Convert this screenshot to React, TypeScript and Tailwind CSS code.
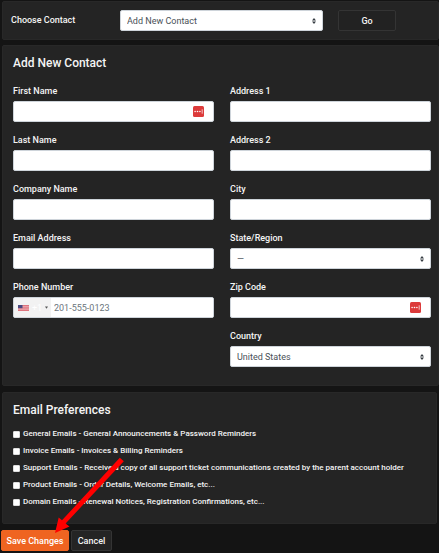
import type { ReactNode } from "react";

const control =
  "block h-[21px] w-full rounded-[2px] border border-[#ced4da] bg-white px-[6px] text-[9px] leading-3 text-[#495057] placeholder:text-[#6c757d] outline-none";

function Panel({ className = "", children }: { className?: string; children: ReactNode }) {
  return (
    <section className={`rounded-[2px] border border-[#282828] bg-[#242424] ${className}`}>{children}</section>
  );
}

function Field({ id, label, children }: { id: string; label: string; children: ReactNode }) {
  return (
    <div className="flex flex-col gap-1">
      <label htmlFor={id} className="text-[9px] leading-3 font-medium">
        {label}
      </label>
      {children}
    </div>
  );
}

function Select({ id, value }: { id: string; value: string }) {
  return (
    <div className="relative">
      <select id={id} className={`${control} appearance-none`}>
        <option>{value}</option>
      </select>
      <svg
        className="pointer-events-none absolute top-2 right-[7px] h-[6px] w-1"
        viewBox="0 0 4 5"
        preserveAspectRatio="none"
        fill="#343a40"
      >
        <path d="M2 0L0 2h4zm0 5L0 3h4z" />
      </svg>
    </div>
  );
}

function PasswordBadge() {
  return (
    <svg className="pointer-events-none absolute top-[5px] right-[10px] h-[11px] w-[11px]" viewBox="0 0 11 11">
      <rect width="11" height="11" rx="1.5" fill="#dc3b3b" />
      <circle cx="2.1" cy="5.5" r="0.8" fill="#fff" />
      <circle cx="4.5" cy="5.5" r="0.8" fill="#fff" />
      <circle cx="6.9" cy="5.5" r="0.8" fill="#fff" />
      <path d="M9.2 3.3v4.4" stroke="#fff" strokeWidth="0.7" />
    </svg>
  );
}

function TextField({ id, label, badge = false }: { id: string; label: string; badge?: boolean }) {
  return (
    <Field id={id} label={label}>
      <div className="relative">
        <input id={id} type="text" className={control} />
        {badge && <PasswordBadge />}
      </div>
    </Field>
  );
}

function Flag() {
  return (
    <svg className="h-[6px] w-[11px] shrink-0" viewBox="0 0 11 6">
      <rect width="11" height="6" fill="#f0b4ba" />
      <path d="M0 .5h11M0 2.2h11M0 3.9h11M0 5.5h11" stroke="#d9636f" strokeWidth="0.8" />
      <rect width="4.5" height="3.2" fill="#4a4a80" />
    </svg>
  );
}

const preferences = [
  "General Emails - General Announcements & Password Reminders",
  "Invoice Emails - Invoices & Billing Reminders",
  "Support Emails - Receive a copy of all support ticket communications created by the parent account holder",
  "Product Emails - Order Details, Welcome Emails, etc...",
  "Domain Emails - Renewal Notices, Registration Confirmations, etc...",
];

export default function App() {
  return (
    <main className="relative min-h-screen bg-[#141414] pt-px font-['Roboto','Liberation_Sans',sans-serif] text-[9px] leading-3 text-[#f4f4f4]">
      <Panel className="ml-[2px] flex items-start py-2 pl-2">
        <label htmlFor="contact" className="w-[109px] shrink-0 py-1 font-medium">
          Choose Contact
        </label>
        <div className="min-w-0 flex-1">
          <Select id="contact" value="Add New Contact" />
        </div>
        <button
          type="button"
          className="mr-[42px] ml-[15px] h-[21px] w-[58px] rounded-[2px] border border-[#343434] bg-[#222] font-medium"
        >
          Go
        </button>
      </Panel>

      <Panel className="mt-[5px] ml-[2px] pt-2 pr-[7px] pb-[18px] pl-[10px]">
        <h2 className="text-[12px] leading-[18px] font-medium">Add New Contact</h2>
        <div className="mt-[13px] grid grid-cols-2 gap-x-4">
          <div className="flex flex-col gap-3">
            <TextField id="first" label="First Name" badge />
            <TextField id="last" label="Last Name" />
            <TextField id="company" label="Company Name" />
            <TextField id="email" label="Email Address" />
            <Field id="phone" label="Phone Number">
              <div className="flex h-[21px] overflow-hidden rounded-[2px] border border-[#ced4da] bg-white">
                <button
                  type="button"
                  aria-label="Country code"
                  className="flex w-[37px] shrink-0 items-center gap-[3px] bg-[#f2f2f2] pl-1 text-white"
                >
                  <Flag />
                  <span>+1</span>
                  <svg className="h-[3px] w-[3px]" viewBox="0 0 4 3" fill="#555">
                    <path d="M0 0h4L2 3z" />
                  </svg>
                </button>
                <input
                  id="phone"
                  type="tel"
                  placeholder="201-555-0123"
                  className="min-w-0 flex-1 bg-white pl-[3px] text-[9px] leading-3 text-[#495057] outline-none placeholder:text-[#6c757d]"
                />
              </div>
            </Field>
          </div>
          <div className="flex flex-col gap-3">
            <TextField id="address1" label="Address 1" />
            <TextField id="address2" label="Address 2" />
            <TextField id="city" label="City" />
            <Field id="state" label="State/Region">
              <Select id="state" value="—" />
            </Field>
            <TextField id="zip" label="Zip Code" badge />
            <Field id="country" label="Country">
              <Select id="country" value="United States" />
            </Field>
          </div>
        </div>
      </Panel>

      <Panel className="mt-[6px] mr-[2px] ml-[2px] pt-2 pb-[15px] pl-[10px]">
        <h2 className="text-[12px] leading-[18px] font-medium">Email Preferences</h2>
        <div className="mt-[9px] flex flex-col gap-[5px] text-[8px] font-medium">
          {preferences.map((text) => (
            <label key={text} className="flex items-center gap-[3px]">
              <input
                type="checkbox"
                className="h-[7px] w-[7px] shrink-0 appearance-none rounded-[1px] border border-[#ddd] bg-white checked:bg-[#ef6421]"
              />
              {text}
            </label>
          ))}
        </div>
      </Panel>

      <div className="mt-[6px] flex gap-[2px] pb-px pl-px">
        <button
          type="button"
          className="h-[21px] w-[68px] rounded-[2px] border border-[#ef6421] bg-[#ef6421] font-medium whitespace-nowrap text-white"
        >
          Save Changes
        </button>
        <button type="button" className="h-[21px] w-[41px] rounded-[2px] border border-[#343434] bg-[#242424] font-medium">
          Cancel
        </button>
      </div>

      <svg
        className="pointer-events-none absolute top-[457px] left-[54px] h-[77px] w-[71px]"
        viewBox="54 457 71 77"
        fill="#ff0000"
      >
        <path d="M55 533L58.7 517.5L62 520.3L119.8 457.8L123.8 461.3L65.6 523.4L69.5 526.5Z" />
      </svg>
    </main>
  );
}
